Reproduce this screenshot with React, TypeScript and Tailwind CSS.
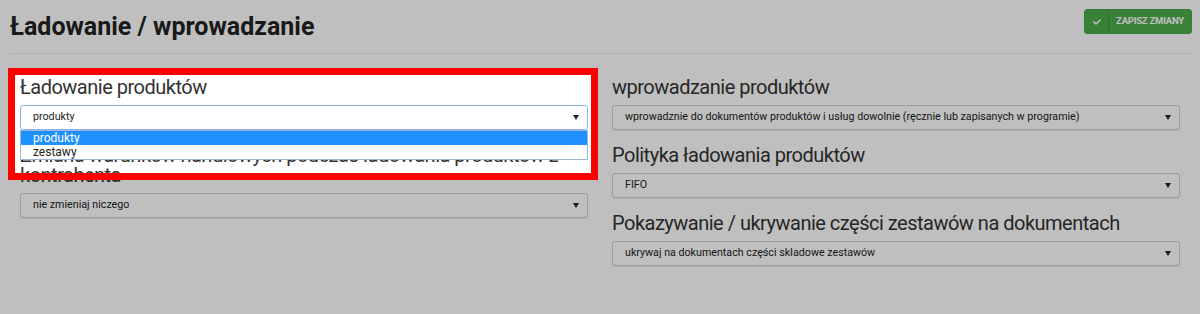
import { FaCheck } from "react-icons/fa";

function Arrow() {
    return (
        <svg width="6" height="5" viewBox="0 0 6 5" className="shrink-0">
            <path d="M0 0h6L3 5z" fill="#222" />
        </svg>
    );
}

function Select({ value, focused = false }: { value: string; focused?: boolean }) {
    return (
        <div
            className={
                focused
                    ? "flex h-[25px] items-center justify-between rounded-[3px] border border-[#8fb3e6] bg-white pl-[12px] pr-[8px] text-[10.7px] text-[#222]"
                    : "flex h-[25px] items-center justify-between rounded-[3px] border border-[#d0d0d0] bg-white pl-[12px] pr-[8px] text-[10.7px] text-[#222] shadow-[0_1px_1px_rgba(0,0,0,0.08)]"
            }
        >
            <span className="truncate">{value}</span>
            <Arrow />
        </div>
    );
}

function Field({ label, value, children }: { label: string; value: string; children?: React.ReactNode }) {
    return (
        <div className="mb-[17px]">
            <div className="-mt-[2px] mb-[8px] text-[20px] leading-[20px] tracking-[-0.5px] text-[#333]">{label}</div>
            <div className="relative">
                <Select value={value} focused={!!children} />
                {children}
            </div>
        </div>
    );
}

export default function App() {
    return (
        <div className="relative h-[314px] overflow-hidden bg-white font-['Roboto',sans-serif]">
            <div className="ml-[10px] mr-[8px] flex h-[54px] items-start justify-between border-b border-[#e8e8e8]">
                <h1 className="mt-[12px] text-[25px] font-bold leading-[30px] text-[#222]">Ładowanie / wprowadzanie</h1>
                <button
                    type="button"
                    className="mt-[9px] flex h-[25px] w-[108px] items-stretch overflow-hidden rounded-[3px] border border-[#46a546] bg-[#4cac4c] text-white"
                >
                    <span className="flex w-[24px] items-center justify-center border-r border-[#3f953f]">
                        <FaCheck size={8} />
                    </span>
                    <span className="flex flex-1 items-center justify-center text-[9.5px] font-bold tracking-tight">ZAPISZ ZMIANY</span>
                </button>
            </div>

            <div className="grid grid-cols-2 gap-x-[24px] px-[20px] pt-[25px]">
                <div>
                    <Field label="Ładowanie produktów" value="produkty">
                        <div className="absolute left-0 right-0 top-full z-10 border border-[#9db5d8] bg-white text-[12px] leading-[14px]">
                            <div className="bg-[#1e90ff] pl-[12px] text-white">produkty</div>
                            <div className="pl-[12px] text-[#222]">zestawy</div>
                        </div>
                    </Field>
                    <Field
                        label="Zmiana warunków handlowych podczas ładowania produktów z kontrahenta"
                        value="nie zmieniaj niczego"
                    />
                </div>
                <div>
                    <Field
                        label="wprowadzanie produktów"
                        value="wprowadznie do dokumentów produktów i usług dowolnie (ręcznie lub zapisanych w programie)"
                    />
                    <Field label="Polityka ładowania produktów" value="FIFO" />
                    <Field
                        label="Pokazywanie / ukrywanie części zestawów na dokumentach"
                        value="ukrywaj na dokumentach części składowe zestawów"
                    />
                </div>
            </div>

            {/* highlight over the first field, rest of the page dimmed */}
            <div className="pointer-events-none absolute left-[8px] top-[68px] z-20 h-[112px] w-[590px] border-[7px] border-[#ff0000] shadow-[0_0_0_2000px_rgba(0,0,0,0.25)]" />
        </div>
    );
}
